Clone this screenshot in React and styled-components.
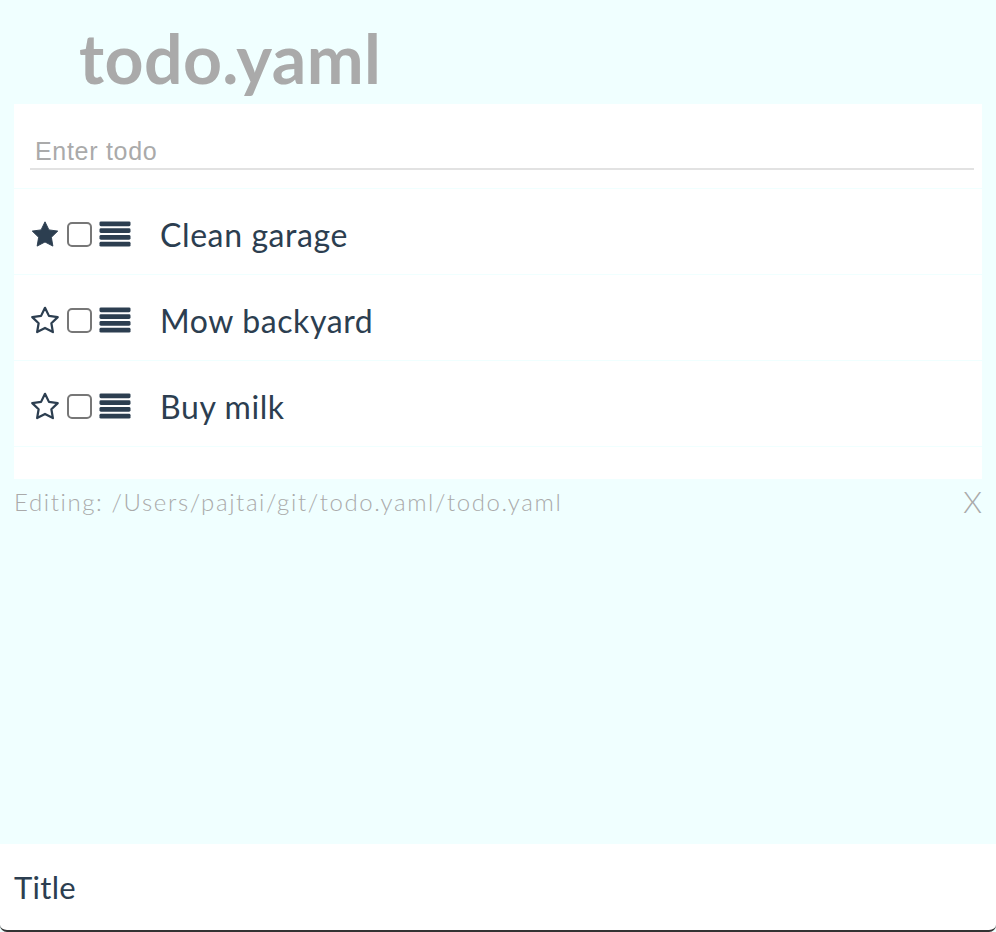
import React from "react";
import styled, { createGlobalStyle } from "styled-components";

const GlobalStyle = createGlobalStyle`
  html, body {
    margin: 0;
    padding: 0;
    background: #f0ffff;
  }
  * {
    box-sizing: border-box;
  }
`;

const Page = styled.div`
  min-height: 100vh;
  display: flex;
  flex-direction: column;
  font-family: Lato, "Noto Sans", sans-serif;
  color: #2c3e50;
`;

const Heading = styled.h1`
  margin: 0;
  padding: 18px 0 0 79px;
  height: 104px;
  font-size: 68px;
  font-weight: 700;
  line-height: 80px;
  letter-spacing: 0.4px;
  color: #aaaaaa;
`;

const Card = styled.div`
  margin: 0 14px;
  background: #ffffff;
  padding-bottom: 32px;
`;

const InputWrap = styled.div`
  height: 85px;
  padding: 28px 8px 0 16px;
  border-bottom: 1px solid #f0ffff;
`;

const TodoInput = styled.input`
  width: 100%;
  border: none;
  border-bottom: 2px solid #e2e2e2;
  outline: none;
  padding: 5px 5px 2px;
  font-family: "Liberation Sans", Arial, sans-serif;
  font-size: 25px;
  letter-spacing: 0.7px;
  color: #2c3e50;
  &::placeholder {
    color: #aaaaaa;
  }
`;

const Row = styled.div`
  height: 86px;
  display: flex;
  align-items: center;
  padding: 6px 0 0 16px;
  border-bottom: 1px solid #f0ffff;
`;

const Icons = styled.div`
  display: flex;
  align-items: center;
  gap: 7px;
  width: 130px;
  margin-top: -1px;
`;

const Box = styled.span`
  width: 25px;
  height: 25px;
  border: 2px solid #777777;
  border-radius: 5px;
  background: #ffffff;
`;

const Label = styled.span`
  font-size: 32px;
  font-weight: 400;
  letter-spacing: 0.6px;
`;

const Status = styled.div`
  display: flex;
  justify-content: space-between;
  align-items: center;
  padding: 4px 14px 0 14px;
  font-size: 24px;
  font-weight: 300;
  letter-spacing: 1.6px;
  color: #aaaaaa;
`;

const Close = styled.span`
  font-size: 30px;
  font-weight: 300;
  letter-spacing: 0;
  cursor: pointer;
`;

const TitleBar = styled.div`
  margin-top: auto;
  height: 88px;
  background: #ffffff;
  border-bottom: 2px solid #333333;
  border-radius: 0 0 7px 7px;
  display: flex;
  align-items: center;
  padding: 0 14px;
  font-size: 31px;
  font-weight: 400;
  letter-spacing: 0.3px;
`;

const Star = ({ filled }) => (
  <svg width="30" height="30" viewBox="0 0 32 30">
    <polygon
      points="16,2 20.2,10.6 29.6,11.9 22.8,18.5 24.4,27.9 16,23.5 7.6,27.9 9.2,18.5 2.4,11.9 11.8,10.6"
      fill={filled ? "#2c3e50" : "none"}
      stroke="#2c3e50"
      strokeWidth={filled ? 1 : 2.4}
      strokeLinejoin="round"
    />
  </svg>
);

const Lines = () => (
  <svg width="32" height="28" viewBox="0 0 33 28">
    {[1, 8, 15, 22].map((y) => (
      <rect key={y} x="0.5" y={y} width="32" height="5" rx="1.5" fill="#2c3e50" />
    ))}
  </svg>
);

const todos = [
  { text: "Clean garage", starred: true },
  { text: "Mow backyard", starred: false },
  { text: "Buy milk", starred: false },
];

export default function App() {
  return (
    <>
      <GlobalStyle />
      <Page>
        <Heading>todo.yaml</Heading>
        <Card>
          <InputWrap>
            <TodoInput placeholder="Enter todo" />
          </InputWrap>
          {todos.map((todo, index) => (
            <Row key={`todo${index}`}>
              <Icons>
                <Star filled={todo.starred} />
                <Box />
                <Lines />
              </Icons>
              <Label>{todo.text}</Label>
            </Row>
          ))}
        </Card>
        <Status>
          <span>Editing: /Users/pajtai/git/todo.yaml/todo.yaml</span>
          <Close>X</Close>
        </Status>
        <TitleBar>Title</TitleBar>
      </Page>
    </>
  );
}
